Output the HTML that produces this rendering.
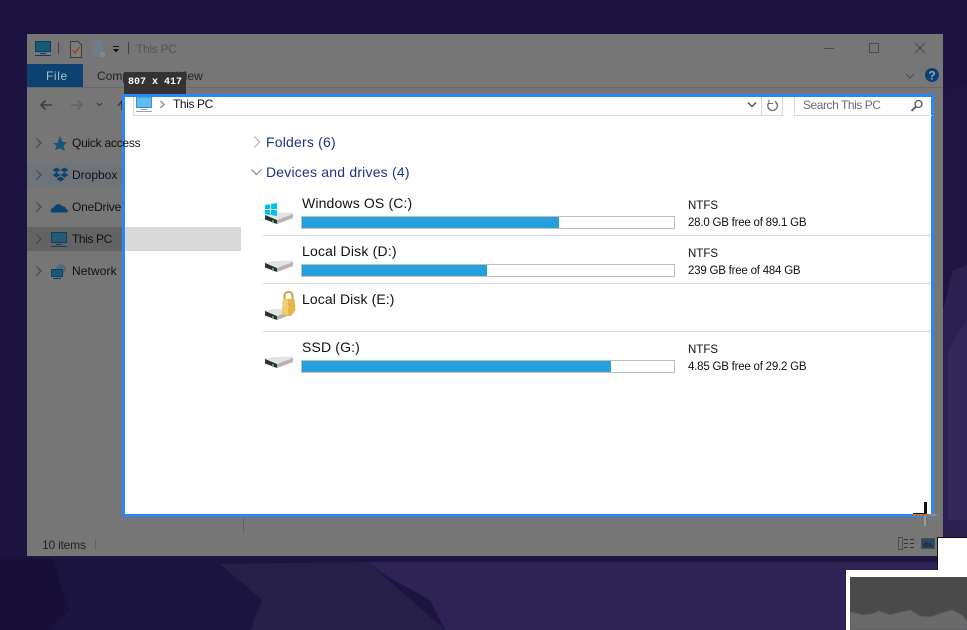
<!DOCTYPE html>
<html><head><meta charset="utf-8"><style>
html,body{margin:0;padding:0;width:967px;height:630px;overflow:hidden;background:#1c1340}
body{position:relative;font-family:"Liberation Sans",sans-serif;font-size:12px;color:#111}
.a{position:absolute}
.t{position:absolute;white-space:nowrap;line-height:16px}
.sep{position:absolute;background:#d9d9d9;height:1px;left:263px;width:668px}
.bar{position:absolute;left:301px;width:372px;height:11px;border:1px solid #bcbcbc;background:#fff}
.bar i{display:block;height:11px;background:#26a0da}
.n{font-size:14px;color:#111;left:302px}
.h{font-size:14px;color:#1e3287;left:266px;letter-spacing:.2px}
.s{font-size:12px;left:72px;color:#111}
.d{left:688px;font-size:11.5px;color:#111}
.f{letter-spacing:-.22px}
</style></head><body>
<svg class="a" style="left:0;top:0" width="967" height="630">
<rect width="967" height="630" fill="#1c1340"/>
<path d="M943 90L967 85V290H943Z" fill="#1f1644"/>
<path d="M943 310L953 270L967 265V560H943Z" fill="#2c2050"/>
<path d="M948 350L967 320V520H948Z" fill="#33265a"/>
<path d="M0 556H967V630H0Z" fill="#1d1541"/>
<path d="M0 556H52L62 590L70 610L50 630H0Z" fill="#181039"/>
<path d="M220 564L368 562L445 630H250L262 600L245 585Z" fill="#262048"/>
<path d="M368 562H967V630H445L430 600L385 575Z" fill="#2f2254"/>
</svg>

<!-- dimmed window -->
<div class="a" style="left:27px;top:34px;width:916px;height:522px;background:#767676"></div>
<div class="a" style="left:27px;top:556px;width:916px;height:2px;background:#1e1540"></div>
<div class="a" style="left:27px;top:87px;width:916px;height:1px;background:#686868"></div>
<div class="a" style="left:27px;top:64px;width:56px;height:23px;background:#0b4272"></div>
<div class="t" style="left:46px;top:68px;color:#b0bdc8;font-size:12px;letter-spacing:.6px">File</div>
<div class="t" style="left:97px;top:68px;color:#222;font-size:12px">Computer</div>
<div class="t" style="left:177px;top:68px;color:#222;font-size:12px">View</div>
<div class="t" style="left:136px;top:41px;color:#565656;font-size:12px;letter-spacing:-.3px">This PC</div>

<svg class="a" style="left:0;top:0" width="967" height="630" fill="none">
<!-- title icons -->
<rect x="35.500" y="41.500" width="15" height="10" fill="#175a78" stroke="#0f3c50"/>
<path d="M40 53.500H46M35 55.500H51" stroke="#0f3c50"/>
<path d="M58.500 42V54M128.500 42V54" stroke="#444"/>
<path d="M70.500 41.500H78L81.500 45V57.500H70.500Z" fill="#7d7d7d" stroke="#3d3d3d"/>
<path d="M72.500 50L75 53L79.500 47" stroke="#a03c18" stroke-width="1.300"/>
<rect x="92" y="41" width="11" height="16" fill="#727c86"/><rect x="100" y="52" width="5" height="5" fill="#7d8894"/>
<path d="M113 46.500H119" stroke="#111"/><path d="M113 49H119L116 52.500Z" fill="#111"/>
<!-- window buttons -->
<path d="M824 48.500H834" stroke="#4c4c4c"/>
<rect x="869.500" y="43.500" width="9" height="9" stroke="#4c4c4c"/>
<path d="M915 43L925 53M925 43L915 53" stroke="#4c4c4c"/>
<path d="M906 74L910 78L914 74" stroke="#4c4c4c"/>
<circle cx="932" cy="75" r="7" fill="#0b4272"/>
<text x="932" y="79.500" text-anchor="middle" font-family="Liberation Sans" font-weight="bold" font-size="12" fill="#8fa4b8">?</text>
<!-- nav -->
<path d="M41 105H52M45.500 100.500L41 105L45.500 109.500" stroke="#3d3d3d" stroke-width="1.600"/>
<path d="M71 105H82M77.500 100.500L82 105L77.500 109.500" stroke="#636363" stroke-width="1.600"/>
<path d="M97 103L99.500 105.500L102 103" stroke="#3d3d3d" stroke-width="1.200"/>
<path d="M118 106L122 101V110" stroke="#3d3d3d" stroke-width="1.600"/>
</svg>
<div class="a" style="left:27px;top:163px;width:95px;height:24px;background:#6e747a"></div>
<div class="a" style="left:27px;top:227px;width:95px;height:24px;background:#636363"></div>
<svg class="a" style="left:0;top:0" width="967" height="630" fill="none">
<path d="M36.500 138.500L41 143L36.500 147.500M36.500 170.500L41 175L36.500 179.500M36.500 202.500L41 207L36.500 211.500M36.500 234.500L41 239L36.500 243.500M36.500 266.500L41 271L36.500 275.500" stroke="#4c4c4c" stroke-width="1.300"/>
<path d="M60 136L62.500 142H67L63.500 146L65 151L60 148.500L55 150L56.500 146L53 143H57.500Z" fill="#17557d"/>
<path d="M57 170L61 167.500L65 170L61 172.500ZM65 170L69 167.500L73 170L69 172.500ZM57 175L61 172.500L65 175L61 177.500ZM65 175L69 172.500L73 175L69 177.500ZM61 179L65 176.500L69 179L65 181.500Z" transform="translate(-4.500 0)" fill="#0b4272"/>
<path d="M51 212.500C50 208 53 207.500 54 207.500C55 204 60 203 62 206C65 206 66 208 66 209C68 209 68.500 212.500 67 212.500Z" fill="#0b4272"/>
<rect x="51.500" y="232.500" width="15" height="10" fill="#1f5d78" stroke="#173f52"/>
<path d="M56 244.500H62M51 246.500H67" stroke="#173f52"/>
<circle cx="61" cy="269" r="5" fill="#4e6a7e"/>
<rect x="51.500" y="269.500" width="11" height="7" fill="#175a7c" stroke="#173f52"/>
<path d="M53 278.500H61" stroke="#173f52"/>
</svg>

<!-- selection -->
<div class="a" style="left:122px;top:94px;width:806px;height:417px;border:3px solid #2b87f5;background:#fff"></div>
<div class="a" style="left:125px;top:227px;width:116px;height:24px;background:#d9d9d9"></div>
<div class="a" style="left:243px;top:517px;width:1px;height:16px;background:#636363"></div>
<div class="a" style="left:95px;top:539px;width:1px;height:11px;background:#636363"></div>
<div class="t" style="left:42px;top:537px;color:#222;font-size:12px;letter-spacing:-.2px">10 items</div>

<!-- label -->
<div class="a" style="left:124px;top:72px;width:62px;height:22px;background:#333;color:#fff;font:bold 10px/22px 'Liberation Mono',monospace;text-align:center">807 x 417</div>

<!-- address bar -->
<div class="a" style="left:133px;top:97px;width:648px;height:18px;border:solid #d9d9d9;border-width:0 1px 1px 1px"></div>
<div class="a" style="left:761px;top:97px;width:1px;height:18px;background:#d9d9d9"></div>
<div class="a" style="left:794px;top:97px;width:137px;height:18px;border:solid #d9d9d9;border-width:0 0 1px 1px"></div>
<div class="t" style="left:173px;top:96px;font-size:12px;color:#111;letter-spacing:-.4px">This PC</div>
<div class="t" style="left:803px;top:97px;font-size:12px;color:#6d6d6d;letter-spacing:-.45px">Search This PC</div>

<div class="t s" style="top:135px;letter-spacing:-.25px">Quick access</div>
<div class="t s" style="top:167px">Dropbox</div>
<div class="t s" style="top:199px;letter-spacing:-.2px;width:50px;overflow:hidden">OneDrive</div>
<div class="t s" style="top:231px;letter-spacing:-.4px">This PC</div>
<div class="t s" style="top:263px;letter-spacing:.1px">Network</div>

<div class="t h" style="top:134px">Folders (6)</div>
<div class="t h" style="top:164px">Devices and drives (4)</div>

<div class="t n" style="top:195px;letter-spacing:.15px">Windows OS (C:)</div>
<div class="bar" style="top:216px"><i style="width:257px"></i></div>
<div class="t d" style="top:198px">NTFS</div><div class="t d f" style="top:215px">28.0 GB free of 89.1 GB</div>
<div class="sep" style="top:235px"></div>

<div class="t n" style="top:243px;letter-spacing:.2px">Local Disk (D:)</div>
<div class="bar" style="top:264px"><i style="width:185px"></i></div>
<div class="t d" style="top:246px">NTFS</div><div class="t d f" style="top:263px">239 GB free of 484 GB</div>
<div class="sep" style="top:283px"></div>

<div class="t n" style="top:291px;letter-spacing:.1px">Local Disk (E:)</div>
<div class="sep" style="top:331px"></div>

<div class="t n" style="top:339px;letter-spacing:.15px">SSD (G:)</div>
<div class="bar" style="top:360px"><i style="width:309px"></i></div>
<div class="t d" style="top:342px">NTFS</div><div class="t d f" style="top:359px">4.85 GB free of 29.2 GB</div>

<svg class="a" style="left:0;top:0" width="967" height="630" fill="none">
<defs><g id="hd"><path d="M0 4.500L9 3L28 2.500V4L12 10L0 5.500Z" fill="#e4e4e4"/><path d="M12 10L28 4V8L12 14Z" fill="#b4b4b4"/><path d="M0 5L12 10V14L0 9.500Z" fill="#303030"/><rect x="7" y="10" width="2" height="2" fill="#3fae49"/></g></defs>
<use href="#hd" x="265" y="210"/><use href="#hd" x="265" y="258"/><use href="#hd" x="265" y="306"/><use href="#hd" x="265" y="354"/>
<!-- win logo -->
<path d="M265 205L270 204V209H265ZM271 204L277 203V209H271ZM265 210H270V215L265 214ZM271 210H277V216L271 215Z" fill="#00c0f0"/>
<!-- lock -->
<path d="M284.500 300V296C284.500 290.500 292.500 290.500 292.500 296V300" stroke="#caa048" stroke-width="2"/>
<path d="M283 299H294.500L295.500 310L291 316H285L282 312Z" fill="#e6b54a"/>
<path d="M283 299H288V315H285L282 312Z" fill="#f2cd70"/>
<!-- address icons -->
<rect x="136.500" y="97" width="15" height="10.500" fill="#5cbcf0" stroke="#3d94c4"/>
<path d="M141 109.500H147M136 111.500H152" stroke="#8aa2b0"/>
<path d="M160.500 101L164 104.500L160.500 108" stroke="#8a8a8a" stroke-width="1.300"/>
<path d="M748 102.500L752 106.500L756 102.500" stroke="#555" stroke-width="1.500"/>
<path d="M775 101.500A4.800 4.800 0 1 1 769 102.500" stroke="#6d6d6d" stroke-width="1.300"/>
<path d="M769 99.500V103.500H773" stroke="#6d6d6d" stroke-width="1"/>
<circle cx="918.500" cy="104" r="3.500" stroke="#555" stroke-width="1.300"/>
<path d="M916 106.500L911.500 111" stroke="#555" stroke-width="1.800"/>
<!-- chevrons -->
<path d="M254.500 136.500L259.500 142L254.500 147.500" stroke="#b0b0b0" stroke-width="1.100"/>
<path d="M251.500 169.500L256.500 174.500L261.500 169.500" stroke="#7d7d7d" stroke-width="1.100"/>
<!-- crosshair -->
<rect x="924" y="502" width="3" height="12" fill="#111"/>
<rect x="913" y="513" width="12" height="1" fill="#111"/>
<rect x="913" y="514" width="24" height="1.500" fill="#e06a10"/>
<rect x="930" y="514" width="7" height="2" fill="#8a8a8a"/>
<rect x="924" y="516" width="2" height="10" fill="#9a9a9a"/>
<!-- status icons -->
<rect x="898.500" y="537.500" width="4" height="12" stroke="#4c4c4c"/>
<path d="M904 539.500H908M910 539.500H914M904 543.500H908M910 543.500H914M904 547.500H908M910 547.500H914" stroke="#333"/>
<rect x="921.500" y="538.500" width="13" height="10" fill="#22496e" stroke="#4c4c4c"/>
<path d="M923 547V544L927 542L933 545V547Z" fill="#27333f"/>
</svg>

<!-- bottom right thumbnail -->
<div class="a" style="left:937px;top:537px;width:30px;height:33px;background:#fff;border-top:1px solid #111;border-left:1px solid #111;box-sizing:border-box"></div>
<div class="a" style="left:846px;top:570px;width:121px;height:60px;background:#fff"></div>
<svg class="a" style="left:850px;top:577px" width="117" height="53">
<rect width="117" height="53" fill="#4a4a4a"/>
<path d="M0 35L12 38L22 37L29 34L40 38L52 35L60 33L70 39L80 40L92 36L102 33L112 38L117 44V53H0Z" fill="#6a6a6a" stroke="#5a5f62"/>
</svg>
</body></html>
